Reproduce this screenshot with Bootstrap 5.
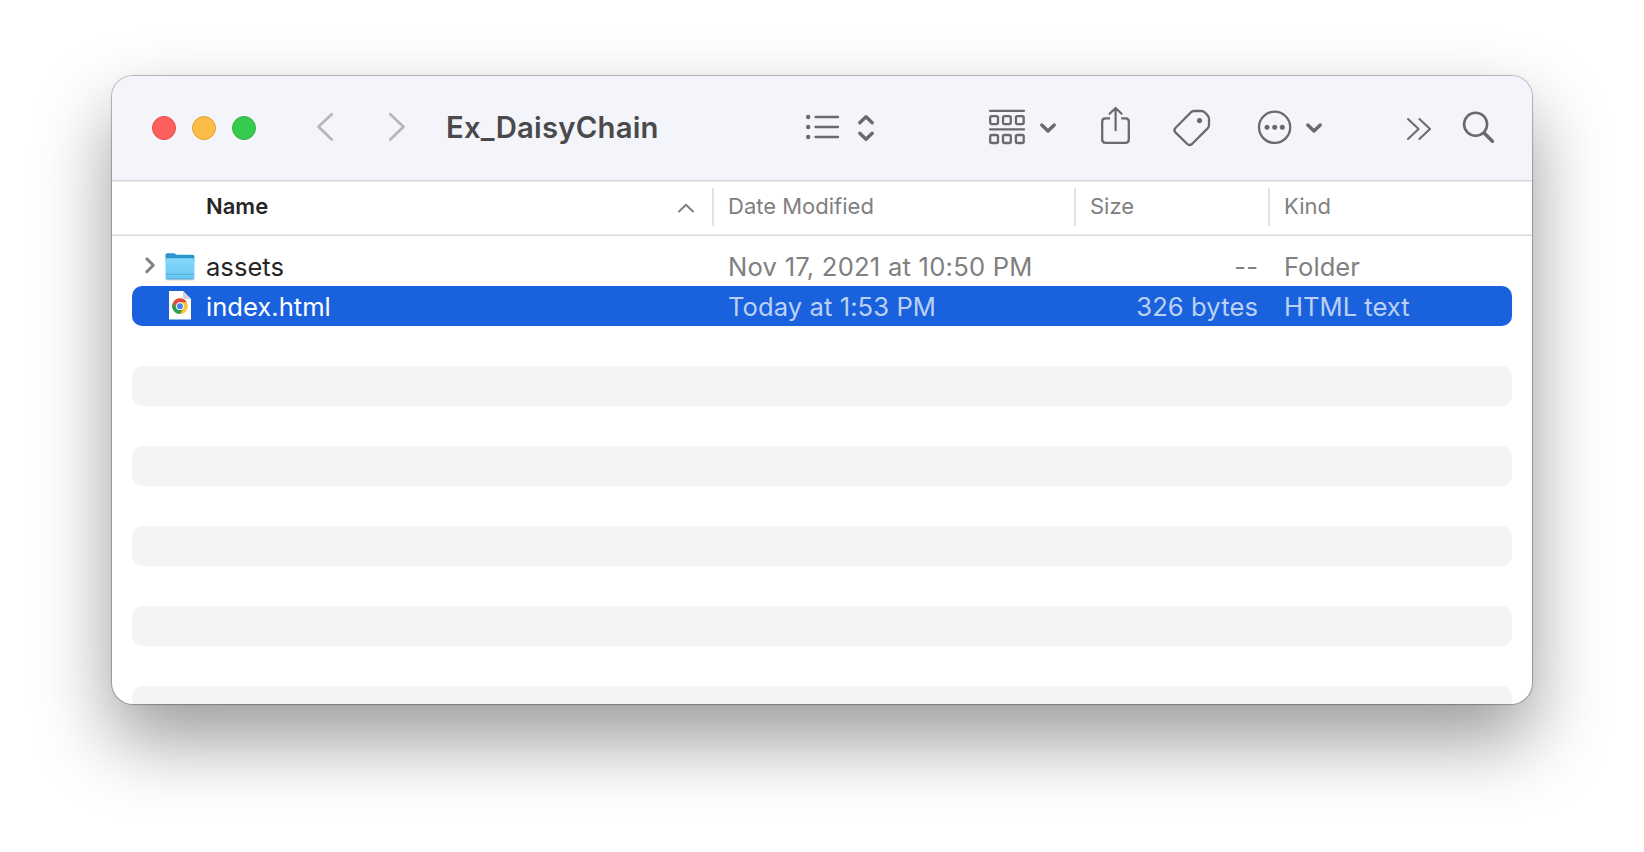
<!DOCTYPE html>
<html lang="en">
<head>
<meta charset="utf-8">
<title>Ex_DaisyChain</title>
<meta name="viewport" content="width=device-width, initial-scale=1">
<link href="https://cdn.jsdelivr.net/npm/bootstrap@5.3.0/dist/css/bootstrap.min.css" rel="stylesheet">
<style>
  body { background: #fff; font-family: Inter, "Liberation Sans", sans-serif; overflow: hidden; }
  .desk { padding: 76px 112px 0; height: 852px; }
  .finder { height: 628px; border-radius: 21px; background: #fff; overflow: hidden;
    box-shadow: 0 0 0 1px rgba(0,0,0,.2), 0 0 3px rgba(0,0,0,.15), 0 36px 76px rgba(0,0,0,.4); }
  .toolbar { height: 106px; background: #f4f5fb; border-bottom: 1px solid #ededee; box-shadow: inset 0 -1px #d6d6d9; padding: 0 0 2px 40px; }
  .light { width: 24px; height: 24px; border-radius: 50%; border: 1px solid; }
  .light-close { background: #fd605c; border-color: #e04a46; }
  .light-min { background: #fdbc45; border-color: #dfa03a; }
  .light-zoom { background: #36cb4f; border-color: #2cb141; }
  .toolbar svg { height: 44px; flex: none; fill: none; stroke: #69696e; stroke-width: 2.3; stroke-linecap: round; stroke-linejoin: round; }
  .toolbar svg.nav-arrow { stroke: #b6b6bb; stroke-width: 2.7; margin-left: 42px; }
  .toolbar svg.nav-back { margin-left: 54px; }
  .toolbar .dot { fill: #69696e; stroke: none; }
  .win-title { flex: none; font-size: 29.3px; font-weight: 600; color: #4a4a4c; letter-spacing: .2px; line-height: 44px; width: 354px; margin-left: 34px; white-space: nowrap; }
  .tool-group { margin-left: 100px; }
  .tool-share { margin-left: 35px; }
  .tool-tag { margin-left: 30px; }
  .tool-more { margin-left: 35px; }
  .tool-overflow { margin-left: 70px; }
  .tool-search { margin-left: 15px; }
  .cols { display: grid; grid-template-columns: 582px 362px 194px 1fr; white-space: nowrap; }
  .col-head { height: 54px; border-bottom: 1px solid #d9d9d9; box-shadow: inset 0 -1px #ececec; padding: 0 20px; font-size: 22px; color: #808080; }
  .col-head > div { line-height: 36px; height: 38px; margin-top: 6px; padding-left: 14px; }
  .col-head > .head-name { padding-left: 74px; font-weight: 600; color: #262626; }
  .head-name svg { fill: none; stroke: #808080; stroke-width: 2; stroke-linecap: round; stroke-linejoin: round; margin: 14px 19px 0 0; }
  .split { border-left: 2px solid #e2e2e2; margin-left: -2px; }
  .files { padding: 10px 20px 0; }
  .file { height: 40px; border-radius: 10px; line-height: 42px; font-size: 25.6px; color: #808080; }
  .file:nth-child(even) { background: #f3f5f4; }
  .file .fname { color: #262626; }
  .file.chosen { background: #1a62dd; color: #bcd0f6; }
  .file.chosen .fname { color: #fff; }
  .file svg { flex: none; }
  .date, .kind { padding-left: 14px; }
  .date { letter-spacing: .23px; }
  .chosen .date { letter-spacing: .07px; }
  .size { padding-right: 12px; text-align: right; letter-spacing: .08px; }
</style>
</head>
<body>
<main class="desk">
  <section class="finder">
    <header class="toolbar d-flex align-items-center">
      <div class="d-flex gap-3">
        <span class="light light-close"></span><span class="light light-min"></span><span class="light light-zoom"></span>
      </div>
      <svg class="nav-arrow nav-back" width="30" viewBox="310 106 30 44"><path d="M331.7 114.3 318.5 126.8 331.7 139.5"/></svg>
      <svg class="nav-arrow" width="30" viewBox="382 106 30 44"><path d="M390.3 114.3 403.5 126.8 390.3 139.5"/></svg>
      <div class="win-title"><span>Ex_DaisyChain</span></div>
      <svg width="80" viewBox="800 106 80 44">
        <g class="dot"><circle cx="808.2" cy="117" r="2.2"/><circle cx="808.2" cy="127" r="2.2"/><circle cx="808.2" cy="137" r="2.2"/></g>
        <path d="M815.5 117H838M815.5 127H838M815.5 137H838"/>
        <path stroke-width="3.4" d="M859.8 122.7 866 116.7 872.2 122.7M859.8 133.2 866 139.2 872.2 133.2"/>
      </svg>
      <svg class="tool-group" width="80" viewBox="980 106 80 44">
        <path d="M990 110.8H1024M990 129.4H1024"/>
        <g><rect x="990.2" y="116.2" width="7.8" height="8" rx="1.6"/><rect x="1003" y="116.2" width="7.8" height="8" rx="1.6"/><rect x="1015.9" y="116.2" width="7.8" height="8" rx="1.6"/>
        <rect x="990.2" y="135" width="7.8" height="8" rx="1.6"/><rect x="1003" y="135" width="7.8" height="8" rx="1.6"/><rect x="1015.9" y="135" width="7.8" height="8" rx="1.6"/></g>
        <path stroke-width="3.4" d="M1041.8 125 1048 131 1054.2 125"/>
      </svg>
      <svg class="tool-share" width="40" viewBox="1095 106 40 44">
        <path d="M1110 118.3H1105.5Q1102.2 118.3 1102.2 121.6V139.6Q1102.2 142.9 1105.5 142.9H1125.5Q1128.8 142.9 1128.8 139.6V121.6Q1128.8 118.3 1125.5 118.3H1121.2" stroke-linecap="butt"/>
        <path stroke-width="2.2" d="M1115.6 130.2V108.6M1109.6 113.8 1115.6 108 1121.6 113.8"/>
      </svg>
      <svg class="tool-tag" width="50" viewBox="1165 106 50 44">
        <path d="M1194 111H1201.5Q1203.4 111 1204.7 112.3L1207.7 115.6Q1209 117 1209 119V125Q1209 127 1207.6 128.4L1192 144Q1189.6 146 1187.3 144L1175.4 132.4Q1173.4 130.3 1175.4 128L1191 112.2Q1192.3 111 1194 111Z"/>
        <circle class="dot" cx="1199.5" cy="120.6" r="2.6"/>
      </svg>
      <svg class="tool-more" width="80" viewBox="1250 106 80 44">
        <circle cx="1274.6" cy="127.3" r="15.6"/>
        <g class="dot"><circle cx="1267" cy="127.3" r="2.5"/><circle cx="1274.7" cy="127.3" r="2.5"/><circle cx="1282.3" cy="127.3" r="2.5"/></g>
        <path stroke-width="3.4" d="M1307.8 125 1314 131 1320.2 125"/>
      </svg>
      <svg class="tool-overflow" width="40" viewBox="1400 106 40 44"><path stroke-width="2" d="M1408 119 1418.6 129 1408 139M1419.4 119 1430 129 1419.4 139"/></svg>
      <svg class="tool-search" width="45" viewBox="1455 106 45 44"><circle cx="1475.6" cy="124.3" r="11.5" stroke-width="2.6"/><path stroke-width="3.6" d="M1484.4 133.3 1492.4 141.2"/></svg>
    </header>

    <div class="cols col-head">
      <div class="head-name d-flex justify-content-between"><span>Name</span><svg width="18" height="12" viewBox="0 0 18 12"><path d="M2 9.500 9 2.800 16 9.500"/></svg></div>
      <div class="split"><span>Date Modified</span></div>
      <div class="split"><span>Size</span></div>
      <div class="split"><span>Kind</span></div>
    </div>

    <div class="files">
      <div class="file cols">
        <div class="fname d-flex">
          <svg width="74" height="40" viewBox="132 246 74 40">
            <defs>
              <linearGradient id="folder" x1="0" y1="0" x2="0" y2="1"><stop offset="0" stop-color="#84d8fb"/><stop offset="1" stop-color="#68c6f3"/></linearGradient>
            </defs>
            <path fill="none" stroke="#808080" stroke-width="3" stroke-linecap="round" stroke-linejoin="round" d="M146.8 258.8 153.3 265.3 146.8 271.8"/>
            <rect x="165.5" y="278" width="29" height="2.6" rx="1" fill="#000" opacity=".16"/>
            <path fill="#2a95cd" d="M165.5 255Q165.5 253.3 167.2 253.3H173.5Q174.6 253.3 175.5 254L176.8 254.8H192.6Q194.4 254.8 194.4 256.6V262H165.5Z"/>
            <rect x="165.5" y="258.3" width="28.9" height="20.9" rx="1.6" fill="url(#folder)"/>
            <path d="M166 274.3H194" stroke="#52afd9" stroke-width="1"/>
            <path d="M166.5 278.8H193.5" stroke="#48a5d2" stroke-width=".8"/>
          </svg><span>assets</span>
        </div>
        <div class="date"><span>Nov 17, 2021 at 10:50 PM</span></div><div class="size"><span>--</span></div><div class="kind"><span>Folder</span></div>
      </div>
      <div class="file cols chosen">
        <div class="fname d-flex">
          <svg width="74" height="40" viewBox="132 286 74 40">
            <path fill="#fff" d="M169 291H183L191 299V319.5H169Z"/>
            <path fill="#d5d5d8" d="M183 291V297.5Q183 299 184.5 299H191Z"/>
            <circle cx="180" cy="306.2" r="7.8" fill="#fbc62d"/>
            <path fill="#2c9f57" d="M173.2 302.3A7.8 7.8 0 0 0 180 314L183.4 308.2 176.6 308.2Z"/>
            <path fill="#de4b3e" d="M173.2 302.3A7.8 7.8 0 0 1 186.8 302.3H180L176.6 308.2Z"/>
            <circle cx="180" cy="306.2" r="3.9" fill="#fff"/><circle cx="180" cy="306.2" r="3" fill="#4384f0"/>
          </svg><span>index.html</span>
        </div>
        <div class="date"><span>Today at 1:53 PM</span></div><div class="size"><span>326 bytes</span></div><div class="kind"><span>HTML text</span></div>
      </div>
      <div class="file"></div><div class="file"></div><div class="file"></div><div class="file"></div><div class="file"></div><div class="file"></div><div class="file"></div><div class="file"></div><div class="file"></div><div class="file"></div>
    </div>
  </section>
</main>
<script src="https://cdn.jsdelivr.net/npm/bootstrap@5.3.0/dist/js/bootstrap.bundle.min.js"></script>
</body>
</html>
